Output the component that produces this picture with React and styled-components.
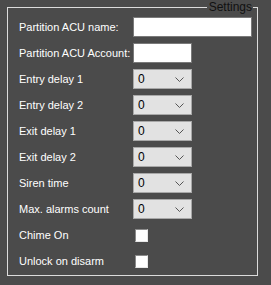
import React from "react";
import styled, { createGlobalStyle } from "styled-components";

const GlobalStyle = createGlobalStyle`
  html, body {
    margin: 0;
    padding: 0;
    background: #4b4b4b;
  }
  body {
    font-family: "Liberation Sans", Arial, sans-serif;
    font-size: 11px;
  }
`;

const rows = [
  { label: "Partition ACU name:", kind: "text", wide: true },
  { label: "Partition ACU Account:", kind: "text" },
  { label: "Entry delay 1", kind: "combo" },
  { label: "Entry delay 2", kind: "combo" },
  { label: "Exit delay 1", kind: "combo" },
  { label: "Exit delay 2", kind: "combo" },
  { label: "Siren time", kind: "combo" },
  { label: "Max. alarms count", kind: "combo" },
  { label: "Chime On", kind: "check" },
  { label: "Unlock on disarm", kind: "check" },
];

function Chevron() {
  return (
    <svg width="9" height="5" viewBox="0 0 9 5">
      <path d="M0.5 0.5 L4.5 4.5 L8.5 0.5" fill="none" stroke="#555" strokeWidth="1" />
    </svg>
  );
}

function Control({ row }) {
  if (row.kind === "text") return <TextBox $wide={row.wide} />;
  if (row.kind === "combo")
    return (
      <Combo>
        <span>0</span>
        <Chevron />
      </Combo>
    );
  return <CheckBox />;
}

function App() {
  return (
    <>
      <GlobalStyle />
      <Page>
        <GroupBox>
          <Legend>Settings</Legend>
          <Form>
            {rows.map((row) => (
              <React.Fragment key={row.label}>
                <Label>{row.label}</Label>
                <Cell>
                  <Control row={row} />
                </Cell>
              </React.Fragment>
            ))}
          </Form>
        </GroupBox>
      </Page>
    </>
  );
}

export default App;

const Page = styled.div`
  width: 271px;
  height: 285px;
  padding: 0;
  box-sizing: border-box;
`;

const GroupBox = styled.fieldset`
  margin: 0 13px 0 7px;
  padding: 0;
  border: 1px solid #dcdcdc;
  min-width: 0;
`;

const Legend = styled.legend`
  margin-left: auto;
  margin-right: 4px;
  padding: 0 1px 0 2px;
  color: #111;
  font-size: 12px;
  line-height: 14px;
`;

const Form = styled.div`
  display: grid;
  grid-template-columns: 114px 1fr;
  grid-auto-rows: 20px;
  row-gap: 6px;
  padding: 3px 5px 4px 11px;
`;

const Label = styled.div`
  display: flex;
  align-items: center;
  color: #fff;
  white-space: nowrap;
  font-size: 11px;
`;

const Cell = styled.div`
  display: flex;
  align-items: center;
`;

const TextBox = styled.div`
  box-sizing: border-box;
  height: 20px;
  width: ${(p) => (p.$wide ? "100%" : "59px")};
  background: #fff;
  border: 1px solid #7a7a7a;
`;

const Combo = styled.div`
  box-sizing: border-box;
  height: 20px;
  width: 59px;
  display: flex;
  align-items: center;
  justify-content: space-between;
  padding: 0 7px 0 4px;
  background: #e2e2e2;
  border: 1px solid #a8a8a8;
  color: #000;
  font-size: 12px;
`;

const CheckBox = styled.div`
  box-sizing: border-box;
  width: 13px;
  height: 13px;
  margin-left: 2px;
  background: #fff;
  border: 1px solid #8a8a8a;
  border-right-color: #e8e8e8;
  border-bottom-color: #e8e8e8;
`;
